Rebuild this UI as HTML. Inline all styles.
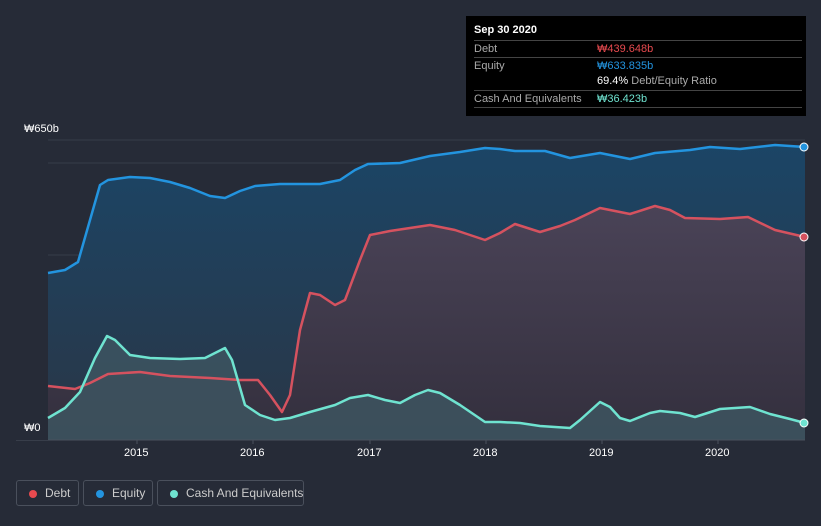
<!DOCTYPE html><html><head><style>
html,body{margin:0;width:821px;height:526px;overflow:hidden}
body{background:#262b37;font-family:"Liberation Sans",sans-serif;position:relative}
.tt{position:absolute;left:466px;top:16px;width:340px;height:100px;background:#000;color:#fff;font-size:11px}
.tt .r{position:absolute;left:8px;width:328px;border-top:1px solid #444;height:16px;line-height:16px;color:#aaa}
.tt .v{position:absolute;left:123px}
.lg{position:absolute;top:480px;height:26px;border:1px solid #4a505c;border-radius:3px;color:#ccc;font-size:12px;line-height:24px;box-sizing:border-box;white-space:nowrap}
.lg i{position:absolute;left:12px;top:9px;width:8px;height:8px;border-radius:50%}
.ax{position:absolute;color:#fff;font-size:11px}
</style></head><body>
<svg width="821" height="526" style="position:absolute;left:0;top:0">
<defs>
<linearGradient id="ge" x1="0" y1="0" x2="0" y2="1"><stop offset="0" stop-color="#1b4566"/><stop offset="1" stop-color="#2a3646"/></linearGradient>
<linearGradient id="gd" x1="0" y1="0" x2="0" y2="1"><stop offset="0" stop-color="#4a4357"/><stop offset="1" stop-color="#332f3d"/></linearGradient>
</defs>
<g stroke="#363c48" stroke-width="1"><line x1="48" y1="163" x2="805" y2="163"/><line x1="48" y1="255" x2="805" y2="255"/><line x1="48" y1="348" x2="805" y2="348"/><line x1="48" y1="140" x2="805" y2="140"/></g>
<path fill="url(#ge)" d="M48,273 L65,270 L78,262 L90,220 L100,185 L108,180 L130,177 L150,178 L170,182 L190,188 L210,196 L225,198 L240,191 L255,186 L280,184 L320,184 L340,180 L355,170 L368,164 L400,163 L430,156 L460,152 L485,148 L500,149 L515,151 L545,151 L570,158 L600,153 L630,159 L655,153 L690,150 L710,147 L740,149 L775,145 L805,147 L805,440 L48,440Z"/>
<path fill="url(#gd)" d="M48,386 L75,389 L90,383 L108,374 L140,372 L170,376 L210,378 L240,380 L258,380 L270,395 L282,412 L290,395 L300,330 L310,293 L320,295 L335,305 L345,300 L360,260 L370,235 L390,231 L410,228 L430,225 L455,230 L470,235 L485,240 L500,233 L515,224 L540,232 L560,226 L575,220 L600,208 L630,214 L655,206 L670,210 L685,218 L720,219 L748,217 L775,230 L805,237 L805,440 L48,440Z"/>
<path fill="#3d5560" opacity="0.85" d="M48,418 L65,408 L80,392 L95,358 L107,336 L115,340 L130,355 L150,358 L180,359 L205,358 L225,348 L232,360 L245,405 L260,415 L275,420 L290,418 L310,412 L335,405 L350,398 L368,395 L385,400 L400,403 L415,395 L428,390 L440,393 L460,405 L485,422 L500,422 L520,423 L540,426 L570,428 L580,420 L600,402 L610,407 L620,418 L630,421 L650,413 L660,411 L680,413 L695,417 L720,409 L750,407 L770,414 L790,419 L805,423 L805,440 L48,440Z"/>
<polyline fill="none" stroke="#2394df" stroke-width="2.5" stroke-linejoin="round" points="48,273 65,270 78,262 90,220 100,185 108,180 130,177 150,178 170,182 190,188 210,196 225,198 240,191 255,186 280,184 320,184 340,180 355,170 368,164 400,163 430,156 460,152 485,148 500,149 515,151 545,151 570,158 600,153 630,159 655,153 690,150 710,147 740,149 775,145 805,147"/>
<polyline fill="none" stroke="#d5525f" stroke-width="2.5" stroke-linejoin="round" points="48,386 75,389 90,383 108,374 140,372 170,376 210,378 240,380 258,380 270,395 282,412 290,395 300,330 310,293 320,295 335,305 345,300 360,260 370,235 390,231 410,228 430,225 455,230 470,235 485,240 500,233 515,224 540,232 560,226 575,220 600,208 630,214 655,206 670,210 685,218 720,219 748,217 775,230 805,237"/>
<polyline fill="none" stroke="#6fe3d0" stroke-width="2.5" stroke-linejoin="round" points="48,418 65,408 80,392 95,358 107,336 115,340 130,355 150,358 180,359 205,358 225,348 232,360 245,405 260,415 275,420 290,418 310,412 335,405 350,398 368,395 385,400 400,403 415,395 428,390 440,393 460,405 485,422 500,422 520,423 540,426 570,428 580,420 600,402 610,407 620,418 630,421 650,413 660,411 680,413 695,417 720,409 750,407 770,414 790,419 805,423"/>
<circle cx="804" cy="147" r="4" fill="#2394df" stroke="#fff" stroke-width="1"/>
<circle cx="804" cy="237" r="4" fill="#d5525f" stroke="#fff" stroke-width="1"/>
<circle cx="804" cy="423" r="4" fill="#6fe3d0" stroke="#fff" stroke-width="1"/>
<line x1="16" y1="440" x2="805" y2="440" stroke="#4a505c"/>
<g stroke="#4a505c"><line x1="137" y1="440" x2="137" y2="444"/><line x1="253" y1="440" x2="253" y2="444"/><line x1="370" y1="440" x2="370" y2="444"/><line x1="486" y1="440" x2="486" y2="444"/><line x1="602" y1="440" x2="602" y2="444"/><line x1="718" y1="440" x2="718" y2="444"/></g>
<rect x="16" y="420" width="32" height="20" fill="#262b37"/>
</svg>
<div class="ax" style="left:24px;top:123px">₩650b</div>
<div class="ax" style="left:24px;top:422px">₩0</div>
<div class="ax" style="left:124px;top:447px">2015</div>
<div class="ax" style="left:240px;top:447px">2016</div>
<div class="ax" style="left:357px;top:447px">2017</div>
<div class="ax" style="left:473px;top:447px">2018</div>
<div class="ax" style="left:589px;top:447px">2019</div>
<div class="ax" style="left:705px;top:447px">2020</div>
<div class="tt">
<div style="position:absolute;left:8px;top:8px;font-weight:bold">Sep 30 2020</div>
<div class="r" style="top:24px">Debt<span class="v" style="color:#e84a4f">₩439.648b</span></div>
<div class="r" style="top:41px">Equity<span class="v" style="color:#2394df">₩633.835b</span></div>
<div class="r" style="top:57px;border-top:none"><span class="v"><b style="color:#fff;font-weight:normal">69.4%</b> Debt/Equity Ratio</span></div>
<div class="r" style="top:74px;border-bottom:1px solid #444">Cash And Equivalents<span class="v" style="color:#6fe3d0">₩36.423b</span></div>
</div>
<div class="lg" style="left:16px;width:63px"><i style="background:#e84a4f"></i><span style="margin-left:28px">Debt</span></div>
<div class="lg" style="left:83px;width:70px"><i style="background:#2394df"></i><span style="margin-left:28px">Equity</span></div>
<div class="lg" style="left:157px;width:147px"><i style="background:#6fe3d0"></i><span style="margin-left:28px">Cash And Equivalents</span></div>
</body></html>
